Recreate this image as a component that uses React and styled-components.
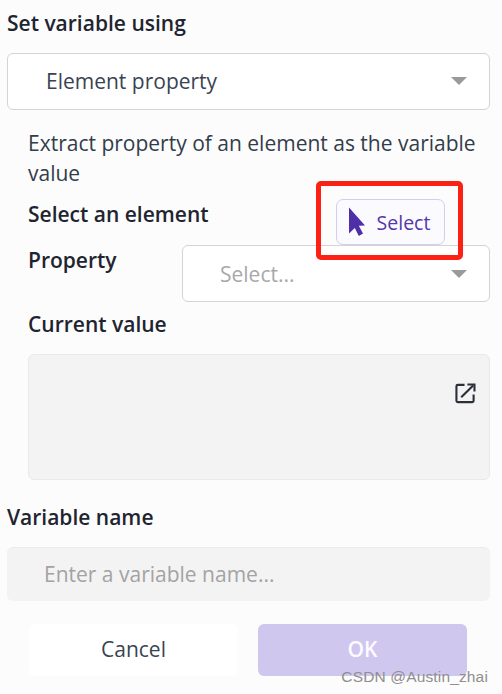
import React from 'react'
import styled, { createGlobalStyle } from 'styled-components'

const GlobalStyle = createGlobalStyle`
  html, body {
    margin: 0;
    padding: 0;
    background: #fcfcfc;
  }
  body {
    font-family: "Open Sans", "Noto Sans", sans-serif;
  }
`

const Page = styled.div`
  position: relative;
  width: 502px;
  height: 694px;
  overflow: hidden;
  box-sizing: border-box;
  padding: 8px 12px 0 7px;
  color: #333c4a;
`

const Heading = styled.div`
  font-size: 21px;
  line-height: 30px;
  font-weight: 600;
  color: #1f2530;
`

const Dropdown = styled.div`
  box-sizing: border-box;
  display: flex;
  align-items: center;
  justify-content: space-between;
  height: 57px;
  flex: ${p => (p.$grow ? 1 : 'none')};
  margin-top: ${p => p.$top || 0}px;
  padding: 0 22px ${p => p.$bottom || 0}px ${p => p.$left}px;
  background: #fff;
  border: 1px solid #d4d4d6;
  border-radius: 6px;
  font-size: 21px;
  color: ${p => (p.$muted ? '#a8a8aa' : '#3a4352')};
`

const Caret = styled.span`
  width: 0;
  height: 0;
  border-left: 8px solid transparent;
  border-right: 8px solid transparent;
  border-top: 8px solid #9a9a9a;
`

const Section = styled.div`
  padding-left: 21px;
  margin-top: 18px;
`

const Description = styled.div`
  font-size: 21px;
  line-height: 30px;
  color: #333c4a;
`

const ElementRow = styled.div`
  display: flex;
  align-items: flex-start;
  height: 57px;
  padding-top: 11px;
  box-sizing: border-box;
`

const Label = styled.div`
  font-size: 21px;
  line-height: 30px;
  font-weight: 600;
  color: #1f2530;
  flex: none;
`

const CurrentLabel = styled(Label)`
  margin-top: 7px;
`

const SelectWrap = styled.div`
  position: relative;
  margin-left: 127px;
`

const SelectButton = styled.button`
  box-sizing: border-box;
  display: flex;
  align-items: center;
  gap: 11px;
  width: 109px;
  height: 46px;
  padding: 0 0 0 11px;
  background: #fbfaff;
  border: 1px solid #d3cdf0;
  border-radius: 7px;
  font-family: inherit;
  font-size: 19.5px;
  color: #5338a8;
`

const Highlight = styled.div`
  position: absolute;
  left: -20px;
  top: -18px;
  width: 147px;
  height: 79px;
  box-sizing: border-box;
  border: 5px solid #fb2115;
  border-radius: 5px;
  pointer-events: none;
`

const PropertyRow = styled.div`
  display: flex;
  align-items: flex-start;
`

const PropertyLabel = styled(Label)`
  width: 154px;
`

const ValueBox = styled.div`
  box-sizing: border-box;
  display: flex;
  justify-content: flex-end;
  height: 126px;
  margin-top: 15px;
  padding: 28px 13px 0 0;
  background: #f3f3f3;
  border: 1px solid #e9e9e9;
  border-radius: 6px;
`

const VariableHeading = styled(Heading)`
  margin-top: 22px;
`

const NameInput = styled.div`
  box-sizing: border-box;
  display: flex;
  align-items: center;
  height: 54px;
  margin-top: 15px;
  padding: 0 0 2px 37px;
  background: #f3f3f3;
  border-top: 1px solid #ebebeb;
  border-radius: 6px;
  font-size: 21px;
  color: #a3a3a3;
`

const Footer = styled.div`
  display: flex;
  gap: 20px;
  margin: 23px 0 0 22px;
`

const FooterButton = styled.div`
  box-sizing: border-box;
  width: 209px;
  height: 52px;
  padding-bottom: 2px;
  display: flex;
  align-items: center;
  justify-content: center;
  border-radius: 6px;
  font-size: 21px;
  background: ${p => (p.$primary ? '#cfc7ee' : '#fff')};
  color: ${p => (p.$primary ? '#fcfbff' : '#3a4352')};
  font-weight: ${p => (p.$primary ? 600 : 400)};
`

const Watermark = styled.div`
  position: absolute;
  right: 14px;
  bottom: 7px;
  font-family: "Liberation Sans", Arial, sans-serif;
  font-size: 15.5px;
  line-height: 20px;
  color: #8f8f8f;
  letter-spacing: 0.15px;
`

const CursorIcon = () => (
  <svg width="18" height="30" viewBox="0 0 18 30">
    <path d="M1 0.5 L17 18.5 L10.8 18.8 L15 26.5 L10.8 29 L6.8 21 L1 26.5 Z" fill="#4f2fa8" />
  </svg>
)

const OpenIcon = () => (
  <svg width="21" height="21" viewBox="0 0 22 22" fill="none" stroke="#2b3038" strokeWidth="2.2">
    <path d="M10 2 H3 Q1.5 2 1.5 3.5 V18.5 Q1.5 20 3 20 H18 Q19.5 20 19.5 18.5 V12" />
    <path d="M6.5 15 L19 2.5" />
    <path d="M13 1.6 H20.4 V9" />
  </svg>
)

const App = () => (
  <Page>
    <GlobalStyle />
    <Heading>Set variable using</Heading>
    <Dropdown $top={15} $left={38} $bottom={2}>
      Element property
      <Caret />
    </Dropdown>
    <Section>
      <Description>
        Extract property of an element as the variable
        <br />
        value
      </Description>
      <ElementRow>
        <Label>Select an element</Label>
        <SelectWrap>
          <SelectButton>
            <CursorIcon />
            Select
          </SelectButton>
          <Highlight />
        </SelectWrap>
      </ElementRow>
      <PropertyRow>
        <PropertyLabel>Property</PropertyLabel>
        <Dropdown $grow $left={37} $muted>
          Select...
          <Caret />
        </Dropdown>
      </PropertyRow>
      <CurrentLabel>Current value</CurrentLabel>
      <ValueBox>
        <OpenIcon />
      </ValueBox>
    </Section>
    <VariableHeading>Variable name</VariableHeading>
    <NameInput>Enter a variable name...</NameInput>
    <Footer>
      <FooterButton>Cancel</FooterButton>
      <FooterButton $primary>OK</FooterButton>
    </Footer>
    <Watermark>CSDN @Austin_zhai</Watermark>
  </Page>
)

export default App
